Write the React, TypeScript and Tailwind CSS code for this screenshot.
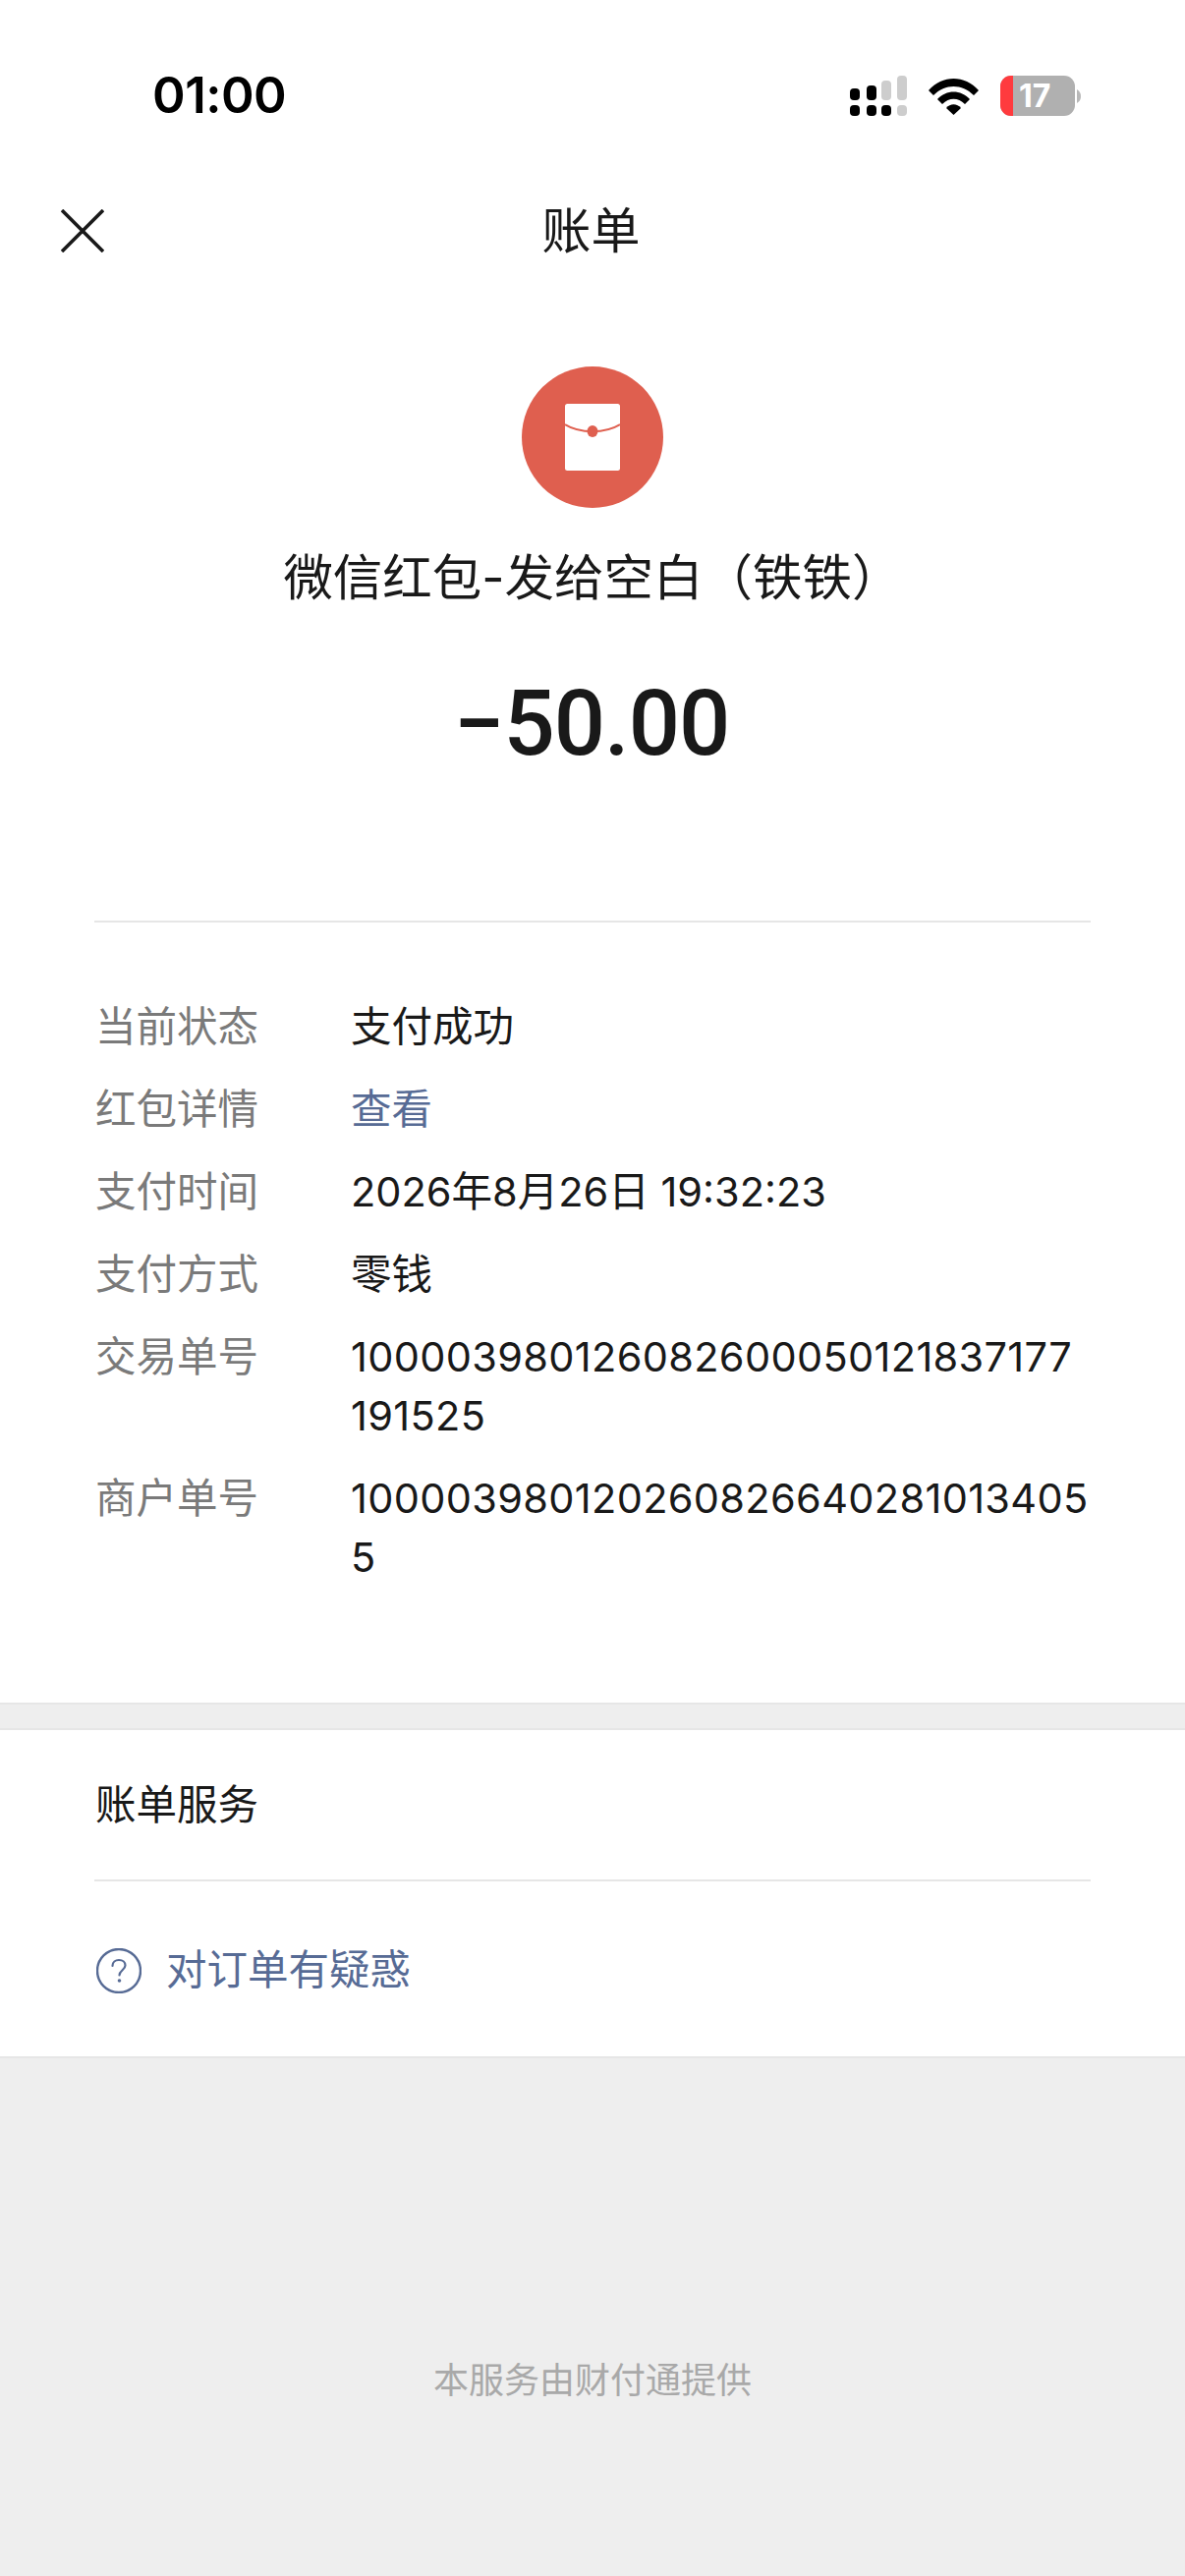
const font = { fontFamily: '"Inter", "Noto Sans CJK SC", sans-serif' };

function Signal() {
  const black = "#000";
  const gray = "#cdcdcd";
  return (
    <svg width="58" height="41" viewBox="0 0 58 41">
      <rect x="0" y="13" width="10" height="12" rx="4" fill={black} />
      <rect x="17" y="10" width="10" height="15" rx="4" fill={black} />
      <rect x="32" y="5" width="10" height="20" rx="4" fill={gray} />
      <rect x="48" y="0" width="10" height="25" rx="4" fill={gray} />
      <rect x="0" y="30" width="10" height="11" rx="4" fill={black} />
      <rect x="17" y="30" width="10" height="11" rx="4" fill={black} />
      <rect x="32" y="30" width="10" height="11" rx="4" fill={black} />
      <rect x="48" y="30" width="10" height="11" rx="4" fill={gray} />
    </svg>
  );
}

function Wifi() {
  return (
    <svg width="51" height="38" viewBox="0 0 51 38">
      <path d="M0 13 C14 -3 37 -3 51 13 L46 18 C34 6 17 6 5 18 Z" fill="#000" />
      <path d="M9 22 C18 12 33 12 42 22 L37 27 C30 20 21 20 14 27 Z" fill="#000" />
      <path d="M18 31 C22 26 29 26 33 31 L25.5 38 Z" fill="#000" />
    </svg>
  );
}

function Battery() {
  return (
    <div className="flex items-center">
      <div className="relative flex h-[41px] w-[76px] items-center overflow-hidden rounded-[11px] bg-[#b0b0b0]">
        <div className="h-full w-[13px] bg-[#ff3b3e]" />
        <span className="ml-[6px] text-[32px] leading-none font-bold text-white" style={{ fontFamily: '"Inter", sans-serif' }}>17</span>
      </div>
      <svg className="ml-[2px]" width="4" height="14" viewBox="0 0 4 14">
        <path d="M0 0 C3 2 4 4 4 7 C4 10 3 12 0 14 Z" fill="#b8b8b8" />
      </svg>
    </div>
  );
}

function RedPacket() {
  return (
    <div className="flex h-[144px] w-[144px] items-center justify-center rounded-full bg-[#df5f4f]">
      <svg width="56" height="68" viewBox="0 0 56 68">
        <rect x="0" y="0" width="56" height="68" rx="2.5" fill="#fff" />
        <path d="M0 21 C8 26 16 28 28 28 C40 28 48 26 56 21" stroke="#df5f4f" strokeWidth="2" fill="none" />
        <ellipse cx="28" cy="28" rx="5.5" ry="6" fill="#df5f4f" />
      </svg>
    </div>
  );
}

function Row({ label, value, link, mono }: { label: string; value: string; link?: boolean; mono?: boolean }) {
  return (
    <div className="flex">
      <div className="w-[260px] shrink-0 text-[#7a7a7a]">{label}</div>
      <div className={`min-w-0 flex-1 whitespace-pre-wrap ${link ? "text-[#576b95]" : "text-[#191919]"} ${mono ? "tracking-[0.33px]" : ""}`}>{value}</div>
    </div>
  );
}

export default function App() {
  return (
    <div className="flex min-h-[2622px] w-[1206px] flex-col bg-[#eeeeee]" style={font}>
      <div className="bg-white">
        <div className="flex h-[158px] items-start justify-between pt-[68px] pr-[106px] pl-[155px]">
          <span className="text-[51px] leading-[58px] font-semibold tracking-[-0.5px] text-black" style={{ fontFamily: '"Inter", sans-serif' }}>01:00</span>
          <div className="flex items-center pt-[9px]">
            <Signal />
            <div className="mr-[22px] ml-[22px]"><Wifi /></div>
            <Battery />
          </div>
        </div>

        <div className="relative flex h-[154px] items-center justify-center">
          <svg className="absolute top-[55px] left-[62px]" width="44" height="44" viewBox="0 0 44 44">
            <path d="M1 1 L43 43 M43 1 L1 43" stroke="#191919" strokeWidth="3.6" fill="none" />
          </svg>
          <span className="-ml-[3px] text-[50px] leading-[70px] text-[#191919]">账单</span>
        </div>

        <div className="flex flex-col items-center pt-[61px]">
          <RedPacket />
          <div className="mt-[36px] text-[50.5px] leading-[70px] text-[#191919]">微信红包-发给空白（铁铁）</div>
          <div className="mt-[59px] -ml-[2px] text-[92px] leading-[110px] font-medium tracking-[-1px] text-[#191919]" style={{ fontFamily: 'Roboto, sans-serif' }}>−50.00</div>
        </div>

        <div className="mx-[96px] mt-[145px] border-t-2 border-[#e6e6e6]" />

        <div className="flex flex-col gap-[24px] pt-[76px] pr-[90px] pb-[118px] pl-[97px] text-[41.5px] leading-[60px]">
          <Row label="当前状态" value="支付成功" />
          <Row label="红包详情" value="查看" link />
          <Row label="支付时间" value={"2026年8月26日 19:32:23"} />
          <Row label="支付方式" value="零钱" />
          <Row label="交易单号" value={"100003980126082600050121837177\n191525"} mono />
          <Row label="商户单号" value={"100003980120260826640281013405\n5"} mono />
        </div>
      </div>

      <div className="h-[28px] border-y-2 border-[#e6e6e6]" />

      <div className="bg-white">
        <div className="flex h-[152px] items-center pl-[97px] text-[41.5px] text-[#191919]">账单服务</div>
        <div className="mx-[96px] border-t-2 border-[#e6e6e6]" />
        <div className="flex h-[178px] items-center gap-[25px] pt-[3px] pl-[98px] text-[41.5px] text-[#576b95]">
          <svg width="46" height="46" viewBox="0 0 46 46" fill="none">
            <circle cx="23" cy="23" r="22" stroke="#576b95" strokeWidth="2.4" />
            <path d="M16.5 18 C16.5 14 19.5 12 23 12 C27 12 29.5 14.5 29.5 17.5 C29.5 22 23.5 22.5 23.5 27.5" stroke="#576b95" strokeWidth="2.2" strokeLinecap="round" />
            <circle cx="23.5" cy="33" r="1.8" fill="#576b95" />
          </svg>
          <span>对订单有疑惑</span>
        </div>
      </div>

      <div className="flex flex-1 flex-col items-center border-t-2 border-[#e6e6e6] pt-[303px]">
        <span className="text-[36px] leading-[50px] text-[#a9a9a9]">本服务由财付通提供</span>
      </div>
    </div>
  );
}
